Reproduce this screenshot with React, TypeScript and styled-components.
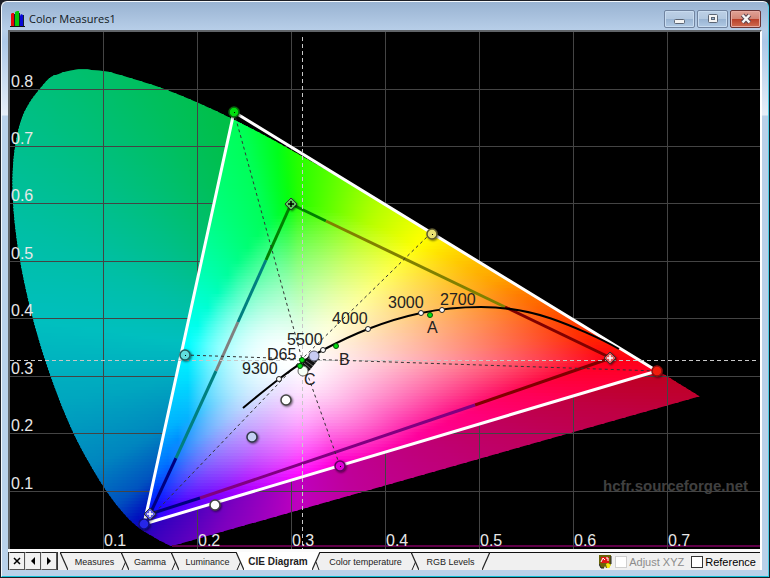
import React from "react";
import styled, { createGlobalStyle } from "styled-components";

const GlobalStyle = createGlobalStyle`
  * { box-sizing: border-box; }
  html, body, #root { height: 100%; }
  body { margin: 0; background: #16181c; overflow: hidden; font-family: "Liberation Sans", Arial, sans-serif; }
`;

const Desktop = styled.div`
  height: 100vh;
  padding: 1px 1px 1px 1px;
  background: #1c1e26;
`;

const WindowFrame = styled.main`
  height: 100%;
  display: flex;
  flex-direction: column;
  padding: 0 6px 6px 6px;
  border: 1px solid #f4f8fc;
  border-right-color: #4fd0e8;
  border-bottom-color: #10c0d8;
  border-radius: 6px 6px 0 0;
  background: linear-gradient(#99b3d2 0, #b7cee8 28px, #adc8e8 40px, #e6eef8 113px, #b9d1ea 114px);
`;

const TitleBar = styled.header`
  display: flex;
  align-items: center;
  flex: none;
  height: 28px;
  padding: 5px 1px 0 2px;
  gap: 3px;
`;

const Title = styled.h1`
  flex: 1;
  margin: 0;
  font: 400 11px/18px "Open Sans", "Noto Sans", sans-serif;
  color: #101820;
`;

const WindowButtons = styled.div`
  display: flex;
  gap: 2px;
`;

const CaptionButton = styled.button<{ $close?: boolean }>`
  display: flex;
  align-items: center;
  justify-content: center;
  width: 31px;
  height: 18px;
  padding: 0;
  border: 1px solid ${(p) => (p.$close ? "#6b3434" : "#7184a0")};
  border-radius: 2px;
  box-shadow: inset 0 0 0 1px ${(p) => (p.$close ? "#e8aaa0" : "#c9dcf0")};
  background: ${(p) =>
    p.$close
      ? "linear-gradient(#e0a297 0, #d48676 48%, #b83e28 50%, #cf6c50 100%)"
      : "linear-gradient(#bdd0e6 0, #b2c8e0 48%, #98b3d2 50%, #b0c9e4 100%)"};
`;

const Client = styled.section`
  display: flex;
  flex-direction: column;
  flex: 1;
  min-height: 0;
  border: 2px solid #606468;
  border-right-color: #ffffff;
  border-bottom: 0;
  background: #000;
`;

const Plot = styled.svg`
  display: block;
  flex: 1;
  min-height: 0;
  width: 100%;
  font-family: "Liberation Sans", Arial, sans-serif;
  font-size: 16px;
`;

const Footer = styled.footer`
  display: flex;
  flex: none;
  height: 21px;
  margin-left: -2px;
  border-top: 3px solid #fbfbfb;
  background: #f0f0f0;
`;

const NavButton = styled.button`
  display: flex;
  align-items: center;
  justify-content: center;
  width: 16px;
  padding: 0;
  border: 1px solid #555;
  border-left-color: #e8e8e8;
  border-top-color: #222;
  background: #f2f2f2;
`;

const NavGroup = styled.div`
  display: flex;
  border: 1px solid #333;
  border-width: 0 1px 0 1px;
`;

const TabList = styled.nav`
  display: flex;
  padding-left: 2px;
`;

const Tab = styled.button<{ $width: number; $active?: boolean }>`
  width: ${(p) => p.$width}px;
  padding: 0;
  border: 0;
  border-top: 1px solid ${(p) => (p.$active ? "#fff" : "#111")};
  background: ${(p) => (p.$active ? "#fff" : "#f0f0f0")};
  color: #222;
  font: ${(p) => (p.$active ? "700 10px" : "400 9px")}/16px "Liberation Sans", Arial, sans-serif;
  white-space: nowrap;
`;

const Slant = styled.svg`
  display: block;
  flex: none;
  width: 8px;
  height: 18px;
`;

const Options = styled.div`
  display: flex;
  flex: 1;
  align-items: center;
  justify-content: flex-end;
  padding-right: 4px;
  border-top: 1px solid #111;
`;

const Check = styled.label<{ $muted?: boolean }>`
  display: flex;
  align-items: center;
  gap: 2px;
  margin-left: ${(p) => (p.$muted ? 3 : 7)}px;
  font-size: 11px;
  line-height: 14px;
  color: ${(p) => (p.$muted ? "#8c8c8c" : "#000")};
`;

const Box = styled.input`
  appearance: none;
  width: 12px;
  height: 12px;
  margin: 0;
  border: 1px solid #333;
  background: #fff;
  &:disabled { border-color: #d0d0d0; }
`;

type RGB = [number, number, number];
type HueStop = { angle: number; color: RGB; radius: number; power: number };

const WHITE = { x: 303, y: 359 };

const HUES: HueStop[] = [
  { angle: 0, color: [255, 0, 20], radius: 305, power: 1.2 },
  { angle: 4, color: [255, 36, 0], radius: 285, power: 1.2 },
  { angle: 11, color: [255, 90, 0], radius: 248, power: 1.2 },
  { angle: 22, color: [255, 160, 0], radius: 205, power: 1.2 },
  { angle: 45, color: [255, 255, 0], radius: 160, power: 1.4 },
  { angle: 65, color: [176, 255, 0], radius: 150, power: 1.4 },
  { angle: 82, color: [85, 255, 0], radius: 152, power: 1.4 },
  { angle: 93, color: [30, 255, 0], radius: 155, power: 1.4 },
  { angle: 96, color: [0, 255, 20], radius: 152, power: 1.4 },
  { angle: 105, color: [0, 255, 88], radius: 138, power: 1.5 },
  { angle: 120, color: [0, 255, 125], radius: 120, power: 1.8 },
  { angle: 139, color: [0, 255, 178], radius: 108, power: 2.3 },
  { angle: 155, color: [0, 255, 220], radius: 108, power: 2.7 },
  { angle: 172, color: [0, 255, 255], radius: 113, power: 2.9 },
  { angle: 190, color: [0, 222, 255], radius: 115, power: 2.7 },
  { angle: 207, color: [0, 178, 255], radius: 130, power: 2.2 },
  { angle: 218, color: [0, 110, 255], radius: 170, power: 1.7 },
  { angle: 224, color: [0, 20, 255], radius: 208, power: 1.5 },
  { angle: 229, color: [70, 0, 255], radius: 195, power: 1.4 },
  { angle: 244, color: [165, 0, 255], radius: 146, power: 1.5 },
  { angle: 268, color: [255, 0, 255], radius: 118, power: 1.7 },
  { angle: 289, color: [255, 0, 208], radius: 108, power: 1.7 },
  { angle: 327, color: [255, 0, 155], radius: 138, power: 1.5 },
  { angle: 342, color: [255, 0, 122], radius: 172, power: 1.4 },
  { angle: 351, color: [255, 0, 88], radius: 215, power: 1.3 },
  { angle: 357, color: [255, 0, 48], radius: 270, power: 1.2 },
  { angle: 360, color: [255, 0, 20], radius: 305, power: 1.2 },
];

const mix = (a: number, b: number, t: number) => a + (b - a) * t;

function colorAt(x: number, y: number): string {
  const dx = x - WHITE.x;
  const dy = WHITE.y - y;
  const angle = ((Math.atan2(dy, dx) * 180) / Math.PI + 360) % 360;
  const next = Math.max(1, HUES.findIndex((h) => h.angle >= angle));
  const a = HUES[next - 1];
  const b = HUES[next];
  const t = (angle - a.angle) / (b.angle - a.angle);
  const radius = 1 / mix(1 / a.radius, 1 / b.radius, t);
  const sat = Math.min(1, Math.hypot(dx, dy) / radius) ** mix(a.power, b.power, t);
  const channel = (i: number) => Math.round(mix(255, mix(a.color[i], b.color[i], t), sat));
  return `rgb(${channel(0)},${channel(1)},${channel(2)})`;
}

const px = (x: number) => 9 + 940 * x;
const py = (y: number) => 548.6 - 574.5 * y;

const LOCUS: [number, number][] = [
  [0.1741, 0.005], [0.1714, 0.0051], [0.1644, 0.0109], [0.1566, 0.0177], [0.144, 0.0297],
  [0.1355, 0.0399], [0.1241, 0.0578], [0.1096, 0.0868], [0.0913, 0.1327], [0.0687, 0.2007],
  [0.0454, 0.295], [0.0235, 0.4127], [0.0082, 0.5384], [0.0039, 0.6548], [0.0139, 0.7502],
  [0.0389, 0.812], [0.0529, 0.8262], [0.0743, 0.8338], [0.0955, 0.832], [0.1142, 0.8262],
  [0.1547, 0.8059], [0.1929, 0.7816], [0.2296, 0.7543], [0.2658, 0.7243], [0.3016, 0.6923],
  [0.3373, 0.6589], [0.3731, 0.6245], [0.4087, 0.5896], [0.4441, 0.5547], [0.4788, 0.5202],
  [0.5125, 0.4866], [0.5448, 0.4544], [0.5752, 0.4242], [0.6029, 0.3965], [0.627, 0.3725],
  [0.6658, 0.334], [0.6915, 0.3083], [0.714, 0.2859], [0.7347, 0.2653],
];

function smoothPath(points: [number, number][]): string {
  const p = points.map(([x, y]) => [px(x), py(y)]);
  const at = (i: number) => p[Math.min(p.length - 1, Math.max(0, i))];
  const control = (i: number, j: number, k: number, sign: number) =>
    [0, 1].map((c) => (at(i)[c] + (sign * (at(k)[c] - at(j)[c])) / 6).toFixed(1)).join(" ");
  const curves = p
    .slice(1)
    .map((end, i) => `C${control(i, i - 1, i + 1, 1)} ${control(i + 1, i, i + 2, -1)} ${end[0].toFixed(1)} ${end[1].toFixed(1)}`);
  return `M${p[0][0].toFixed(1)} ${p[0][1].toFixed(1)}${curves.join("")}Z`;
}

const LOCUS_PATH = smoothPath(LOCUS);
const GAMUT = "234,112 657,371 144,524";

const ROW = 3;
const STEP = 10;
const ROWS = Array.from({ length: 162 }, (_, i) => 66 + i * ROW);
const COLUMNS = Array.from({ length: 71 }, (_, i) => 8 + i * STEP);

function SpectrumDefs() {
  const span = COLUMNS[COLUMNS.length - 1] - COLUMNS[0];
  return (
    <defs>
      {ROWS.map((y) => (
        <linearGradient key={y} id={`row${y}`}>
          {COLUMNS.map((x) => (
            <stop key={x} offset={(x - COLUMNS[0]) / span} stopColor={colorAt(x, y + ROW / 2)} />
          ))}
        </linearGradient>
      ))}
      <clipPath id="locus"><path d={LOCUS_PATH} /></clipPath>
      <clipPath id="gamut"><polygon points={GAMUT} /></clipPath>
      <filter id="shadow" x="-50%" y="-50%" width="220%" height="220%">
        <feDropShadow dx="1" dy="1" stdDeviation="1" floodOpacity="0.6" />
      </filter>
      <g id="spectrum">
        {ROWS.map((y) => (
          <rect key={y} x={COLUMNS[0]} y={y} width={span} height={ROW + 1} fill={`url(#row${y})`} />
        ))}
      </g>
    </defs>
  );
}

const GAMUT_EDGES: [string, string][] = [
  ["M291 204L326 221", "#008000"],
  ["M326 221L505 307", "#808000"],
  ["M505 307L611 358", "#800000"],
  ["M611 358L475 405", "#800000"],
  ["M475 405L200 498", "#800080"],
  ["M200 498L150 514", "#000080"],
  ["M150 514L176 458", "#000080"],
  ["M176 458L216 371", "#008080"],
  ["M216 371L238 322", "#808080"],
  ["M238 322L266 260", "#008080"],
  ["M266 260L291 204", "#008000"],
];

const TEMPERATURES: [string, number, number, number, number][] = [
  ["9300", 279, 379, 242, 374],
  ["5500", 323, 350, 287, 345],
  ["4000", 368, 329, 332, 324],
  ["3000", 421, 313, 388, 308],
  ["2700", 442, 310, 440, 305],
];
const ILLUMINANTS: [string, number, number, number, number][] = [
  ["D65", 302, 360, 267, 360],
  ["C", 300, 366, 304, 385],
  ["B", 336, 346, 339, 365],
  ["A", 430, 315, 427, 333],
];
const MARKERS: [number, number, string, string, boolean][] = [
  [234, 112, "#00dc10", "#086010", true],
  [432, 234, "#e8e070", "#605c30", true],
  [185, 355, "#60dede", "#206060", true],
  [657, 371, "#f01c10", "#901010", false],
  [144, 524, "#2828e8", "#101080", false],
  [340, 466, "#e000d8", "#600060", true],
  [215, 505, "#ffffff", "#444444", false],
  [252, 437, "#c4d0f4", "#303848", false],
  [286, 400, "#ffffff", "#444444", false],
];
const PRIMARIES: [number, number, string, string][] = [
  [291, 204, "#60c860", "#000"],
  [610, 358, "#e05858", "#fff"],
  [150, 514, "#5858e0", "#fff"],
];

function CieDiagram() {
  return (
    <Plot viewBox="10 32 750 517" role="img" aria-label="CIE 1931 chromaticity diagram">
      <SpectrumDefs />
      <g clipPath="url(#locus)">
        <use href="#spectrum" />
        <rect x="10" y="32" width="751" height="517" fill="#000" opacity="0.25" />
      </g>
      <path d="M172 546H761" stroke="#600048" strokeWidth="2" />
      <g stroke="#444" strokeWidth="1">
        {[0.1, 0.2, 0.3, 0.4, 0.5, 0.6, 0.7].map((v) => (
          <path key={v} d={`M${Math.round(px(v)) + 0.5} 32V549`} />
        ))}
        {[0.1, 0.2, 0.3, 0.4, 0.5, 0.6, 0.7, 0.8].map((v) => (
          <path key={v} d={`M10 ${Math.floor(py(v)) + 0.5}H761`} />
        ))}
      </g>
      <g clipPath="url(#gamut)">
        <g clipPath="url(#locus)"><use href="#spectrum" /></g>
      </g>
      <text x="603" y="491" fontSize="15" fontWeight="700" fill="#404040">hcfr.sourceforge.net</text>

      <g fill="none" strokeWidth="3">
        {GAMUT_EDGES.map(([d, color]) => <path key={d} d={d} stroke={color} />)}
      </g>
      <path d="M234 112L657 371L144 524Z" fill="none" stroke="#fff" strokeWidth="3" />
      <g stroke="#c8c8c8" strokeDasharray="4 3">
        <path d="M10 360.5H758" />
        <path d="M302.5 37V549" />
      </g>
      <g stroke="#333" strokeDasharray="3 3" fill="none">
        <path d="M234 112L302 359L340 466" />
        <path d="M431 233L302 359L144 524" />
        <path d="M185 355L302 359L657 371" />
      </g>
      <path
        d="M243 408C255 398 266 389 279 379S308 358 323 350S350 336 368 329S402 317 421 313S456 307 481 307S532 312 551 318.500S602 339 619 349"
        fill="none" stroke="#000" strokeWidth="2"
      />
      <path d="M306 367L314 357" stroke="#111" strokeWidth="10" strokeLinecap="round" />
      <path d="M304 363L311 369M306 361L313 366M308 358L316 363" stroke="#666" />

      {PRIMARIES.map(([x, y, fill, cross]) => (
        <g key={x} filter="url(#shadow)">
          <path d={`M${x} ${y - 6}l6 6l-6 6l-6 -6z`} fill={fill} stroke="#303030" />
          <path d={`M${x - 3} ${y}h6M${x} ${y - 3}v6`} stroke={cross} strokeWidth="1.500" />
        </g>
      ))}
      {MARKERS.map(([x, y, fill, stroke, dot]) => (
        <g key={x} filter="url(#shadow)">
          <circle cx={x} cy={y} r="5" fill={fill} stroke={stroke} strokeWidth="1.500" />
          {dot && <rect x={x} y={y} width="1" height="1" fill="#000" />}
        </g>
      ))}
      <circle cx="303" cy="371" r="5" fill="#f6fff6" stroke="#666" />
      <circle cx="314" cy="356" r="5" fill="#c8ccf4" stroke="#55586c" />
      {ILLUMINANTS.map(([name, x, y]) => (
        <circle key={name} cx={x} cy={y} r="2.500" fill="#00e010" stroke="#045008" />
      ))}
      {TEMPERATURES.map(([name, x, y]) => (
        <circle key={name} cx={x} cy={y} r="2.500" fill="#fff" stroke="#222" />
      ))}
      <g fill="#222">
        {[...TEMPERATURES, ...ILLUMINANTS].map(([name, , , x, y]) => (
          <text key={name} x={x} y={y}>{name}</text>
        ))}
      </g>
      <g fill="#e8e8e8">
        {["0.1", "0.2", "0.3", "0.4", "0.5", "0.6", "0.7"].map((v) => (
          <text key={v} x={Math.round(px(Number(v))) + 1} y="546">{v}</text>
        ))}
        {["0.1", "0.2", "0.3", "0.4", "0.5", "0.6", "0.7", "0.8"].map((v) => (
          <text key={v} x="11" y={Math.floor(py(Number(v))) - 2}>{v}</text>
        ))}
      </g>
    </Plot>
  );
}

type SlantKind = "start" | "middle" | "before" | "after" | "end";

const SLANT_FILL: Record<SlantKind, [string, string]> = {
  start: ["#f0f0f0", "#f0f0f0"],
  middle: ["#f0f0f0", "#f0f0f0"],
  before: ["#f0f0f0", "#fff"],
  after: ["#fff", "#f0f0f0"],
  end: ["#f0f0f0", "#f0f0f0"],
};

function TabSlant({ kind }: { kind: SlantKind }) {
  const rising = kind === "after" || kind === "end";
  const [left, right] = SLANT_FILL[kind];
  return (
    <Slant viewBox="0 0 8 18" aria-hidden="true">
      <rect width="8" height="18" fill={right} />
      <path d={rising ? "M0 0H8L0 18Z" : "M0 0L8 18H0Z"} fill={left} />
      {kind !== "before" && kind !== "after" && <path d="M0 .5H8" stroke="#111" />}
      <path d={rising ? "M8 0L0 18" : "M0 0L8 18"} stroke="#222" strokeWidth="1.200" />
      {(kind === "middle" || kind === "before") && <path d="M4.500 10L1 18" stroke="#222" />}
      {kind === "after" && <path d="M4 10L7 18" stroke="#222" />}
    </Slant>
  );
}

const TABS: { label: string; width: number; active?: boolean; after: SlantKind }[] = [
  { label: "Measures", width: 53, after: "middle" },
  { label: "Gamma", width: 42, after: "middle" },
  { label: "Luminance", width: 57, after: "before" },
  { label: "CIE Diagram", width: 68, active: true, after: "after" },
  { label: "Color temperature", width: 91, after: "middle" },
  { label: "RGB Levels", width: 63, after: "end" },
];

export default function App() {
  return (
    <Desktop>
      <GlobalStyle />
      <WindowFrame>
        <TitleBar>
          <svg width="16" height="18" viewBox="0 0 16 18" aria-hidden="true">
            <path d="M0 16.500H15" stroke="#111" />
            <path d="M1 16V4l1-1h2v13z" fill="#e80808" />
            <path d="M5 16V2l2-1h2v15z" fill="#08c808" />
            <path d="M10 16V6l1-2 2 1v11z" fill="#0808d8" />
            <path d="M4.500 4V16M9.500 3V16M13.500 5V16" stroke="#123" />
          </svg>
          <Title>Color Measures1</Title>
          <WindowButtons>
            <CaptionButton aria-label="Minimize">
              <svg width="12" height="12"><rect x=".5" y="6.500" width="10" height="4" rx="1" fill="#f4f4f4" stroke="#5b6574" /></svg>
            </CaptionButton>
            <CaptionButton aria-label="Maximize">
              <svg width="12" height="12">
                <rect x="1.500" y="1.500" width="9" height="8" rx="1" fill="#f4f4f4" stroke="#5b6574" />
                <rect x="4.500" y="4.500" width="3" height="2" fill="#9bb4d0" stroke="#5b6574" />
              </svg>
            </CaptionButton>
            <CaptionButton $close aria-label="Close">
              <svg width="12" height="12" fill="none">
                <path d="M2.500 2L9.500 9.500M9.500 2L2.500 9.500" stroke="#5c4550" strokeWidth="4.500" />
                <path d="M2.500 2L9.500 9.500M9.500 2L2.500 9.500" stroke="#f6f6f6" strokeWidth="2.500" />
              </svg>
            </CaptionButton>
          </WindowButtons>
        </TitleBar>
        <Client>
          <CieDiagram />
          <Footer>
            <NavGroup>
              <NavButton aria-label="Close view">
                <svg width="8" height="8"><path d="M1 1L7 7M7 1L1 7" stroke="#000" strokeWidth="1.500" /></svg>
              </NavButton>
              <NavButton aria-label="Previous tab">
                <svg width="8" height="8"><path d="M6 0V8L2 4z" /></svg>
              </NavButton>
              <NavButton aria-label="Next tab">
                <svg width="8" height="8"><path d="M2 0V8L6 4z" /></svg>
              </NavButton>
            </NavGroup>
            <TabList>
              <TabSlant kind="start" />
              {TABS.map((tab) => (
                <React.Fragment key={tab.label}>
                  <Tab $width={tab.width} $active={tab.active}>{tab.label}</Tab>
                  <TabSlant kind={tab.after} />
                </React.Fragment>
              ))}
            </TabList>
            <Options>
              <svg width="13" height="14" viewBox="0 0 13 14" aria-hidden="true">
                <path d="M0 0H12V9L10 13H7L6 11L5 13H2L0 9Z" fill="#6a6408" />
                <path d="M0 9L2 13H5M12 1V9" stroke="#222" fill="none" />
                <rect x="2" y="2" width="8" height="6" fill="#e01818" />
                <path d="M2 7L4 3L6 5M7 3H9V6" stroke="#fff" fill="none" />
                <path d="M7 9L9 8L12 10L10 13H8Z" fill="#f8ec10" />
              </svg>
              <Check $muted><Box type="checkbox" disabled />Adjust XYZ</Check>
              <Check><Box type="checkbox" />Reference</Check>
            </Options>
          </Footer>
        </Client>
      </WindowFrame>
    </Desktop>
  );
}
